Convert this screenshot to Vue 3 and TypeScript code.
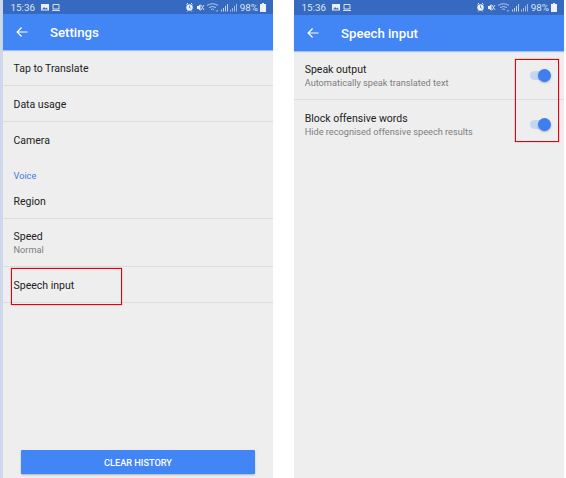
<script setup lang="ts">
import { ref } from "vue";

type Row = { title: string; sub?: string; section?: boolean; noLine?: boolean };

const phones = [
  { id: "settings", title: "Settings" },
  { id: "speech", title: "Speech input" },
];

const settings = ref<Row[]>([
  { title: "Tap to Translate" },
  { title: "Data usage" },
  { title: "Camera", noLine: true },
  { title: "Voice", section: true },
  { title: "Region" },
  { title: "Speed", sub: "Normal" },
  { title: "Speech input" },
]);

const speech = ref([
  { title: "Speak output", sub: "Automatically speak translated text", on: true },
  { title: "Block offensive words", sub: "Hide recognised offensive speech results", on: true },
]);
</script>

<template>
  <div class="page">
    <div class="strip"></div>

    <section v-for="p in phones" :key="p.id" class="phone" :class="p.id">
      <div class="status">
        <span class="time">15:36</span>
        <svg class="ic left-ic" width="20" height="9" viewBox="0 0 20 9">
          <path d="M0 1h8v6.500H0z" fill="#fff" opacity=".9" />
          <path d="M1 6.500l2-2.500 1.500 1.500 1-1 1.500 2z" fill="#3a6bbd" />
          <path d="M12 1.500h6v4.500h-6zM11 7.500h8" fill="none" stroke="#fff" stroke-width="1" opacity=".8" />
        </svg>
        <span class="spacer"></span>
        <svg class="ic" width="52" height="11" viewBox="0 0 52 11">
          <circle cx="3.500" cy="5.500" r="3.200" fill="#fff" opacity=".9" />
          <path d="M.5 2.500l1.500-1.500M6.500 2.500L5 1M1.200 9.500l1-1M5.800 9.500l-1-1" stroke="#fff" stroke-width="1" opacity=".85" />
          <path d="M3.500 3.500v2l1.300.8" fill="none" stroke="#3a6bbd" stroke-width=".8" />
          <path d="M11 4h1.500l2-2v7l-2-2H11z" fill="#fff" opacity=".9" />
          <path d="M15 3l3 5M18 3l-3 5" stroke="#fff" stroke-width=".9" opacity=".8" />
          <path d="M21 3.500q5.500-3.500 11 0M23 5.500q3.500-2 7 0M25 7.500q1.500-1 3 0" fill="none" stroke="#fff" stroke-width=".9" opacity=".7" />
          <path d="M30 8l1 1.500 1-1.500" fill="none" stroke="#fff" stroke-width=".7" opacity=".6" />
          <path d="M35 7.500h1v2h-1zM37 6h1v3.500h-1zM39 4h1v5.500h-1zM41 2h1v7.500h-1z" fill="#fff" opacity=".7" />
          <path d="M44 7.500h1v2h-1zM46 6h1v3.500h-1zM48 4h1v5.500h-1zM50 2h1v7.500h-1z" fill="#fff" opacity=".55" />
        </svg>
        <span class="pct">98%</span>
        <svg class="ic" width="6" height="9" viewBox="0 0 6 9"><path d="M2 0h2v1h2v8H0V1h2z" fill="#fff" opacity=".9" /></svg>
      </div>
      <header class="bar">
        <svg class="back" width="12" height="12" viewBox="0 0 12 12">
          <path d="M11.500 6H1.200M5.600 1.500L1.100 6l4.500 4.500" fill="none" stroke="#fff" stroke-width="1.200" />
        </svg>
        <h1>{{ p.title }}</h1>
      </header>

      <div v-if="p.id === 'settings'" class="list">
        <template v-for="r in settings" :key="r.title">
          <div v-if="r.section" class="section">{{ r.title }}</div>
          <div v-else class="row" :class="{ tall: r.sub, plain: r.noLine }">
            <div class="title">{{ r.title }}</div>
            <div v-if="r.sub" class="sub">{{ r.sub }}</div>
          </div>
        </template>
      </div>
      <div v-else class="list">
        <div v-for="(s, i) in speech" :key="i" class="opt" :class="{ plain: i === speech.length - 1 }">
          <div class="opt-text">
            <div class="title">{{ s.title }}</div>
            <div class="sub">{{ s.sub }}</div>
          </div>
          <span class="toggle" :class="{ on: s.on }"></span>
        </div>
      </div>

      <button v-if="p.id === 'settings'" class="clear">CLEAR HISTORY</button>
      <div class="mark" :class="p.id === 'settings' ? 'mark-speech' : 'mark-toggles'"></div>
    </section>
  </div>
</template>

<style scoped>
.page {
  display: flex;
  width: 566px;
  height: 478px;
  overflow: hidden;
  background: #fff;
  font-family: Roboto, "Liberation Sans", sans-serif;
}

.strip {
  width: 3px;
  background: #cdd8ea;
}

.phone {
  position: relative;
  display: flex;
  flex-direction: column;
  width: 270px;
  background: #eeeeee;
}

.phone.speech {
  margin-left: 21px;
}

.status {
  display: flex;
  align-items: center;
  height: 14px;
  padding: 0 7px 0 7.500px;
  background: #356ac0;
  color: #dfe7f5;
  font-size: 9.800px;
}

.speech .status {
  height: 15px;
}

.left-ic {
  margin-left: 6px;
}

.spacer {
  flex: 1;
}

.ic {
  display: block;
  flex: none;
}

.pct {
  margin: 0 2px 0 2px;
}

.bar {
  display: flex;
  align-items: center;
  height: 36px;
  background: #4285f4;
  box-shadow: 0 1px 1px rgba(66, 133, 244, 0.45);
}

.back {
  margin-left: 13px;
}

.bar h1 {
  margin: 0 0 0 22px;
  color: #fff;
  font-size: 13.200px;
  font-weight: 500;
}

.list {
  flex: 1;
}

.row {
  display: flex;
  flex-direction: column;
  justify-content: center;
  height: 36px;
  padding: 1px 0 0 10.500px;
  border-bottom: 1px solid #dcdcdc;
  box-sizing: border-box;
}

.row:not(.tall) {
  padding-top: 2px;
}

.row.tall {
  height: 48px;
}

.row.plain,
.opt.plain {
  border-bottom-color: transparent;
}

.title {
  color: #222;
  font-size: 10.500px;
  line-height: 14px;
}

.sub {
  margin-top: -1px;
  color: #7e7e7e;
  font-size: 9.200px;
  line-height: 13px;
}

.section {
  height: 25px;
  padding: 12px 0 0 10.500px;
  box-sizing: border-box;
  color: #3b78e7;
  font-size: 9.200px;
  line-height: 12px;
}

.opt {
  display: flex;
  align-items: center;
  justify-content: space-between;
  height: 49px;
  padding: 1px 17px 0 10.700px;
  border-bottom: 1px solid #dcdcdc;
  box-sizing: border-box;
}

.toggle {
  position: relative;
  display: block;
  width: 17px;
  height: 9px;
  border-radius: 5px;
  background: #c5d6f2;
}

.toggle.on::after {
  content: "";
  position: absolute;
  top: -2px;
  right: -4px;
  width: 13px;
  height: 13px;
  border-radius: 50%;
  background: #3d7fee;
  box-shadow: 0 1px 2px rgba(0, 0, 0, 0.25);
}

.clear {
  flex: none;
  align-self: center;
  width: 234px;
  height: 24px;
  margin: 0 0 4px;
  border: none;
  border-radius: 1px;
  background: #4285f4;
  color: #fff;
  font-family: inherit;
  font-size: 9.200px;
  font-weight: 500;
  box-shadow: 0 1px 2px rgba(0, 0, 0, 0.25);
}

/* red callouts drawn over the screenshot */
.mark {
  position: absolute;
  border: 1px solid #e6000f;
  box-shadow: 0 0 1px rgba(225, 0, 15, 0.7);
  box-sizing: border-box;
}

.mark-speech {
  left: 8px;
  top: 268px;
  width: 111px;
  height: 37px;
}

.mark-toggles {
  left: 221px;
  top: 59px;
  width: 44px;
  height: 83px;
}
</style>
